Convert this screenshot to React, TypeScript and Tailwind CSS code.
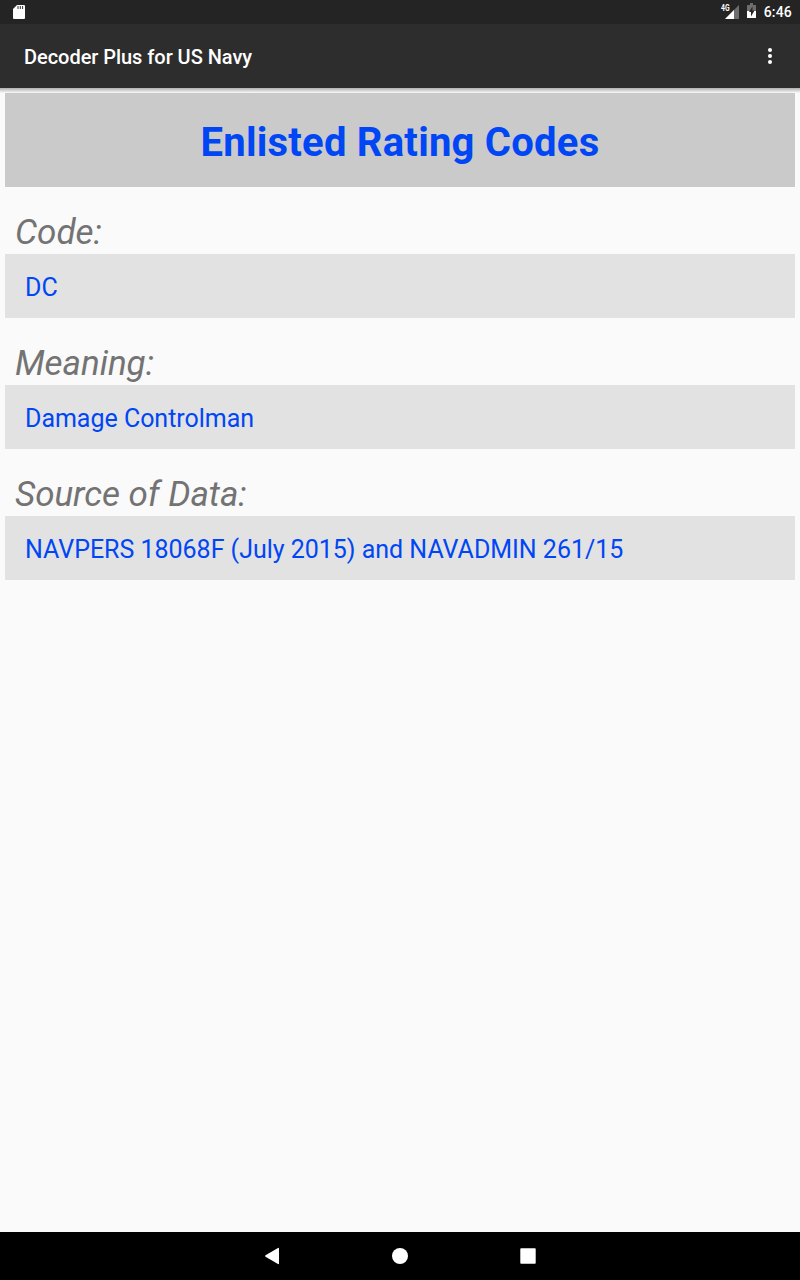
import React from "react";

const fields = [
  { label: "Code:", value: "DC" },
  { label: "Meaning:", value: "Damage Controlman" },
  { label: "Source of Data:", value: "NAVPERS 18068F (July 2015) and NAVADMIN 261/15" },
];

function StatusBar() {
  return (
    <div className="flex h-6 shrink-0 items-center justify-between bg-[#242424] pr-2 pl-[11px] text-white">
      <svg width="16" height="24" viewBox="0 0 16 24">
        <path d="M6 5h7q1 0 1 1v12q0 1-1 1H3q-1 0-1-1V9z" fill="#fff" />
        <path d="M7 6v3M9.300 6v3M11.600 6v3" stroke="#333" strokeWidth="1" />
      </svg>
      <div className="flex items-center">
        <svg width="20" height="24" viewBox="0 0 20 24">
          <path d="M19 5v14H5z" fill="#6d6d6d" />
          <path d="M14 10v9H5z" fill="#fff" />
          <text x="1" y="11" fontSize="8.500" fontWeight="700" fill="#fff" fontFamily="Roboto" textLength="8.500" lengthAdjust="spacingAndGlyphs">4G</text>
        </svg>
        <svg className="ml-[7px]" width="10" height="24" viewBox="0 0 10 24">
          <path d="M3 3h3v2h2.500q.5 0 .5.500V11H0V5.500Q0 5 .5 5H3z" fill="#6d6d6d" />
          <path d="M0 11h9v6.500q0 .5-.5.500h-8q-.5 0-.5-.5z" fill="#fff" />
          <path d="M5.500 6.500L2 12h2v4.500L7.500 10.500h-2z" fill="#242424" />
        </svg>
        <span className="ml-[7px] text-sm font-medium tracking-[0.2px]">6:46</span>
      </div>
    </div>
  );
}

export default function App() {
  return (
    <div className="flex h-[1280px] w-[800px] flex-col bg-[#fafafa] font-['Roboto',sans-serif]">
      <StatusBar />
      <header className="flex h-16 shrink-0 items-center justify-between bg-[#2d2d2d] pr-[18px] pl-6 text-white">
        <h1 className="pt-0.5 text-xl font-medium tracking-[-0.04px]">Decoder Plus for US Navy</h1>
        <svg width="24" height="24" viewBox="0 0 24 24" fill="currentColor">
          <circle cx="12" cy="6" r="2" /><circle cx="12" cy="12" r="2" /><circle cx="12" cy="18" r="2" />
        </svg>
      </header>
      <div className="h-[5px] shrink-0 bg-linear-to-b from-[#b0b0b0] to-[#fafafa]" />
      <main className="flex flex-1 flex-col px-[5px]">
        <h2 className="flex h-[94px] items-center justify-center bg-[#cacaca] pt-1.5 text-[40px] font-bold tracking-[0.23px] text-[#0046f5]">Enlisted Rating Codes</h2>
        {fields.map(({ label, value }) => (
          <section key={label} className="flex flex-col">
            <h3 className="flex h-[67px] items-end pl-2.5 text-[35px] leading-[42px] tracking-[-0.04px] text-[#737373] italic">{label}</h3>
            <p className="flex h-16 items-center bg-[#e2e2e2] pt-1 pl-5 text-[25px] tracking-[-0.02px] text-[#0046f5]">{value}</p>
          </section>
        ))}
      </main>
      <nav className="flex h-12 shrink-0 items-center justify-center gap-[104px] bg-black text-white">
        <svg width="24" height="24" viewBox="0 0 24 24" fill="currentColor"><path d="M18 4q1-.5 1 .5v15q0 1-1 .5L5.500 12.700q-1-.7 0-1.400z" /></svg>
        <svg width="24" height="24" viewBox="0 0 24 24" fill="currentColor"><circle cx="12" cy="12" r="8" /></svg>
        <svg width="24" height="24" viewBox="0 0 24 24" fill="currentColor"><rect x="4.300" y="4.300" width="15.400" height="15.400" rx=".8" /></svg>
      </nav>
    </div>
  );
}
